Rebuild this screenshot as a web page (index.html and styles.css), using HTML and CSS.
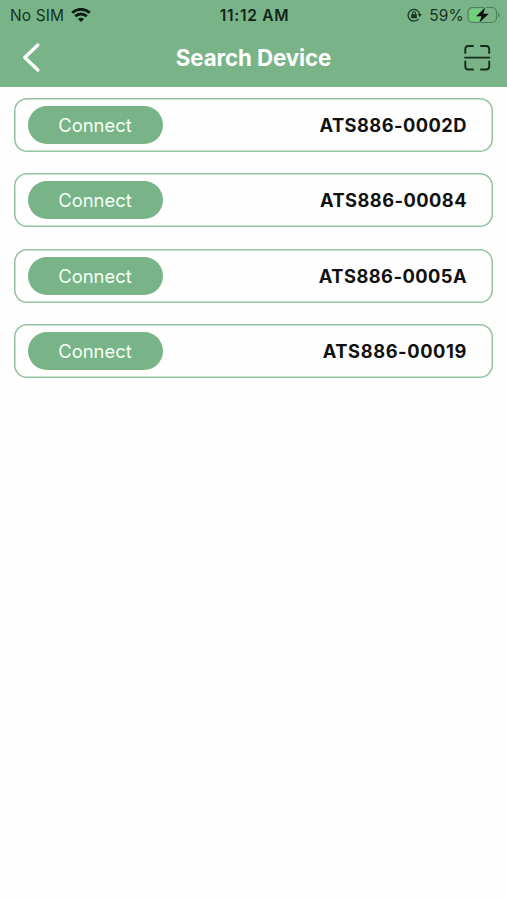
FILE: index.html
```html
<!DOCTYPE html>
<html lang="en">
<head>
<meta charset="utf-8">
<title>Search Device</title>
<link rel="stylesheet" href="styles.css">
</head>
<body>
<header class="header">
  <div class="status">
    <div class="status-left">
      <span class="carrier">No SIM</span>
      <svg class="wifi" width="20" height="15" viewBox="0 0 20 15" fill="none" stroke="#0b1c12" stroke-width="2.9">
        <path d="M1.200 4.800C6.200.200 13.800.200 18.800 4.800"/>
        <path d="M4.200 8.300C7.500 5.200 12.500 5.200 15.800 8.300"/>
        <path d="M7 11C8.800 9.400 11.200 9.400 13 11L10 14Z" fill="#0b1c12" stroke="none"/>
      </svg>
    </div>
    <span class="time">11:12 AM</span>
    <div class="status-right">
      <svg class="lock" width="15" height="14" viewBox="0 0 15 14" fill="none" stroke="#173322" stroke-width="1.3">
        <path d="M11.500 10.900A5.800 5.800 0 1 1 12.700 6.500"/>
        <path d="M10.800 6H14.700L12.800 9.300Z" fill="#173322" stroke="none"/>
        <rect x="4.100" y="6.200" width="5.800" height="4" rx=".6" fill="#173322" stroke="none"/>
        <path d="M5.500 6.500V5.200a1.500 1.500 0 0 1 3 0v1.300" stroke-width="1.100"/>
      </svg>
      <span class="percent">59%</span>
      <svg class="battery" width="33" height="18" viewBox="0 0 33 18">
        <rect x="1" y="1.500" width="28.500" height="15" rx="4.500" fill="none" stroke="#4f7e60" stroke-width="1.100"/>
        <path d="M5.500 3H17V15H5.500A3 3 0 0 1 2.500 12V6A3 3 0 0 1 5.500 3Z" fill="#6fd077"/>
        <path d="M31 6.500Q32.600 7.200 32.600 9T31 11.500Z" fill="#4f7e60"/>
        <path d="M18.200 1.500L9.300 10.300H14.600L12.300 16.800L21.700 7.700H16.300Z" fill="#06120a" stroke="#76b587" stroke-width="1.600" stroke-linejoin="round" paint-order="stroke"/>
      </svg>
    </div>
  </div>
  <div class="nav">
    <svg class="back" width="20" height="32" viewBox="0 0 20 32" fill="none" stroke="#fff" stroke-width="3.400" stroke-linecap="round" stroke-linejoin="round">
      <path d="M16.800 3L3.800 15.500L16.800 28"/>
    </svg>
    <h1 class="title">Search Device</h1>
    <svg class="scan" width="28" height="28" viewBox="0 0 28 28" fill="none" stroke="#142e1e" stroke-width="1.900" stroke-linecap="round">
      <path d="M2.300 9V5Q2.300 2 5.300 2H10M18 2H23.200Q26.200 2 26.200 5V9M26.200 17.500V22.500Q26.200 25.500 23.200 25.500H18M10 25.500H5.300Q2.300 25.500 2.300 22.500V17.500M2 13.600H26.500"/>
    </svg>
  </div>
</header>
<main class="list">
  <div class="device"><button class="connect">Connect</button><span class="name">ATS886-0002D</span></div>
  <div class="device"><button class="connect">Connect</button><span class="name">ATS886-00084</span></div>
  <div class="device"><button class="connect">Connect</button><span class="name">ATS886-0005A</span></div>
  <div class="device"><button class="connect">Connect</button><span class="name last">ATS886-00019</span></div>
</main>
</body>
</html>
```

FILE: styles.css
```css
* { box-sizing: border-box; }
body {
  margin: 0;
  min-height: 900px;
  background: #fefefe;
  font-family: Inter, "Liberation Sans", sans-serif;
}
.header { height: 87px; background: #78b487; }
.status {
  display: grid;
  grid-template-columns: 1fr auto 1fr;
  align-items: center;
  height: 30px;
  padding: 0 7px 0 10px;
  font-size: 15.5px;
  line-height: 21px;
  color: #173322;
}
.status-left, .status-right { display: flex; align-items: center; }
.status-left { gap: 7px; }
.status-right { justify-content: flex-end; }
.carrier { letter-spacing: .1px; }
.time { margin-right: 1px; font-weight: 600; color: #10251a; letter-spacing: .7px; }
.percent { margin: 0 3px 0 7px; letter-spacing: .2px; }
.nav {
  display: grid;
  grid-template-columns: 1fr auto 1fr;
  align-items: center;
  height: 55px;
  padding: 0 16px 0 21px;
}
.title {
  margin: 0 5px 0 0;
  color: #fff;
  font-size: 22.3px;
  font-weight: 700;
  line-height: 28px;
  letter-spacing: -.1px;
}
.scan { justify-self: end; }
.list {
  display: flex;
  flex-direction: column;
  gap: 21.5px;
  padding: 10.8px 14px 0;
}
.device {
  display: flex;
  align-items: center;
  justify-content: space-between;
  height: 54px;
  padding: 0 26px 0 14px;
  box-shadow: inset 0 0 0 1.5px #91c39e;
  border-radius: 13px;
}
.connect {
  width: 135px;
  height: 38px;
  padding: 0 1px 0 0;
  border: 0;
  border-radius: 19px;
  background: #78b487;
  color: #f4fff5;
  font: 400 18.4px/24px Inter, "Liberation Sans", sans-serif;
}
.name {
  color: #111;
  font-size: 18.3px;
  font-weight: 700;
  line-height: 24px;
  letter-spacing: .45px;
}
.last { letter-spacing: .6px; }
```
